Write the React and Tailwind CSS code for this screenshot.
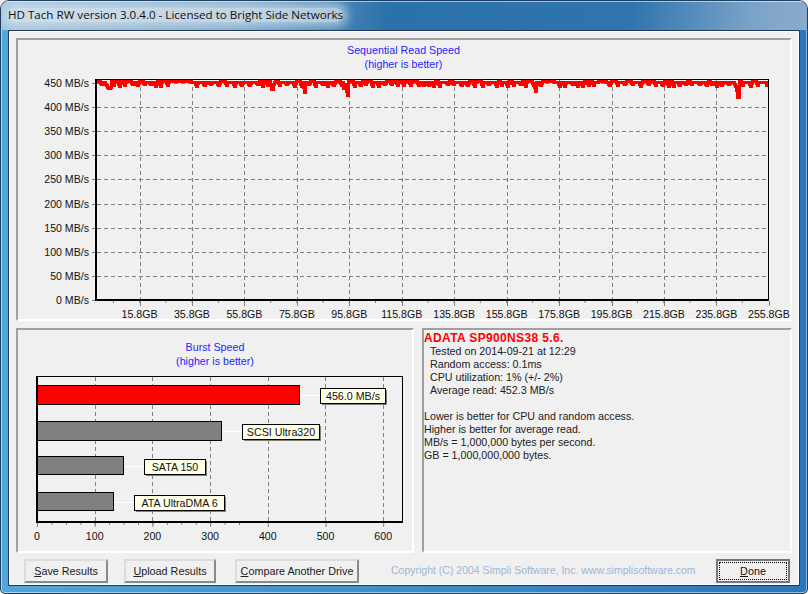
const font = { fontFamily: '"Liberation Sans", Arial, sans-serif' };

function tracePath() {
  let seed = 11;
  const rnd = () => {
    seed = (seed * 16807) % 2147483647;
    return seed / 2147483647;
  };
  const big = { 106: 87, 107: 88, 108: 88, 109: 87, 269: 85, 270: 89, 271: 89, 303: 92, 302: 87, 342: 88, 343: 87, 345: 91, 346: 95, 533: 87, 534: 91, 735: 90, 736: 97, 737: 97 };
  const flat = (x) => (x >= 172 && x < 190) || (x >= 543 && x < 553) || (x >= 597 && x < 605);
  const c = {};
  let x = 97;
  while (x <= 767) {
    const p = 5 + Math.floor(rnd() * 4);
    const top = 81 + Math.floor(rnd() * 2);
    const d = 84 + Math.floor(rnd() * 3);
    for (let i = 0; i < p; i++) {
      let y = top;
      if (i === p - 3) y = top + Math.round((d - top) / 2);
      if (i === p - 2) y = d;
      if (i === p - 1) y = top + 1;
      c[x + i] = y;
    }
    x += p;
  }
  let out = '';
  for (let i = 97; i <= 765; i++) {
    let y = c[i];
    if (flat(i)) y = 81;
    if (big[i]) y = big[i];
    if (i >= 763) y = i === 765 ? 85 : 82;
    c[i] = y;
    const prev = i > 97 ? c[i - 1] : y;
    const t = Math.min(prev, y) - 1;
    const b = Math.max(prev, y) + 2;
    out += `M${i} ${t}h3V${b}h-3Z`;
  }
  return out;
}

function SpeedChart() {
  const ys = [450, 400, 350, 300, 250, 200, 150, 100, 50, 0];
  const xs = ['15.8GB', '35.8GB', '55.8GB', '75.8GB', '95.8GB', '115.8GB', '135.8GB', '155.8GB', '175.8GB', '195.8GB', '215.8GB', '235.8GB', '255.8GB'];
  const yOf = (i) => 83 + i * 24.1;
  const xOf = (i) => 139.5 + i * 52.45;
  return (
    <svg width="776" height="283" viewBox="16 38 776 283" className="block absolute left-0 top-0" style={font}>
      {ys.map((v, i) => (
        <g key={v}>
          {i < 9 && <line x1="97" x2="768" y1={Math.round(yOf(i)) + 0.5} y2={Math.round(yOf(i)) + 0.5} stroke="#808080" strokeDasharray="4 3" />}
          <line x1="92" x2="96" y1={Math.round(yOf(i)) + 0.5} y2={Math.round(yOf(i)) + 0.5} stroke="#808080" />
          <text x="89" y={yOf(i) + 4} textAnchor="end" fontSize="10.6" fill="#111">{v} MB/s</text>
        </g>
      ))}
      {xs.map((v, i) => (
        <g key={v}>
          {i < 12 && <line x1={Math.round(xOf(i)) + 0.5} x2={Math.round(xOf(i)) + 0.5} y1="80" y2="300" stroke="#808080" strokeDasharray="4 3" />}
          <line x1={Math.round(xOf(i)) + 0.5} x2={Math.round(xOf(i)) + 0.5} y1="301" y2="306" stroke="#808080" />
          <text x={xOf(i)} y="318" textAnchor="middle" fontSize="10.6" fill="#111">{v}</text>
        </g>
      ))}
      {Array.from({ length: 25 }, (_, i) => (
        <line key={i} x1={113.5 + i * 26.2} x2={113.5 + i * 26.2} y1="301" y2="303" stroke="#808080" />
      ))}
      <path d={tracePath()} fill="#ff0000" shapeRendering="crispEdges" />
      <line x1="95.5" x2="769" y1="79.5" y2="79.5" stroke="#000" />
      <line x1="768.5" x2="768.5" y1="79" y2="301" stroke="#000" />
      <line x1="96" x2="96" y1="79" y2="301" stroke="#000" strokeWidth="2" />
      <line x1="95" x2="769" y1="300" y2="300" stroke="#000" strokeWidth="2" />
    </svg>
  );
}

function BurstChart() {
  const gx = [95, 152, 210, 268, 325, 383];
  const bars = [
    { y: 385, h: 19, w: 262, c: '#ff0000', lx: 320, ly: 388, lw: 65, t: '456.0 MB/s' },
    { y: 421, h: 19, w: 184, c: '#808080', lx: 242, ly: 424, lw: 77, t: 'SCSI Ultra320' },
    { y: 456, h: 18, w: 86, c: '#808080', lx: 144, ly: 459, lw: 61, t: 'SATA 150' },
    { y: 492, h: 18, w: 76, c: '#808080', lx: 134, ly: 495, lw: 90, t: 'ATA UltraDMA 6' },
  ];
  return (
    <svg width="398" height="225" viewBox="16 328 398 225" className="block absolute left-0 top-0" style={font}>
      {gx.map((x) => (
        <line key={x} x1={x + 0.5} x2={x + 0.5} y1="377" y2="521" stroke="#808080" strokeDasharray="4 3" />
      ))}
      {bars.map((b) => (
        <g key={b.t}>
          <line x1={37 + b.w} x2={b.lx} y1={b.ly + 7.5} y2={b.ly + 7.5} stroke="#fff" />
          <rect x="37.5" y={b.y + 0.5} width={b.w} height={b.h} fill={b.c} stroke="#000" />
          <rect x={b.lx + 2} y={b.ly + 2} width={b.lw} height="15" fill="#808080" />
          <rect x={b.lx + 0.5} y={b.ly + 0.5} width={b.lw} height="15" fill="#ffffe8" stroke="#000" />
          <text x={b.lx + b.lw / 2 + 0.5} y={b.ly + 12} textAnchor="middle" fontSize="10.7" fill="#111">{b.t}</text>
        </g>
      ))}
      <line x1="37" x2="403" y1="376.5" y2="376.5" stroke="#000" />
      <line x1="402.5" x2="402.5" y1="376" y2="522" stroke="#000" />
      <line x1="37" x2="37" y1="376" y2="523" stroke="#000" strokeWidth="2" />
      <line x1="36" x2="403" y1="522" y2="522" stroke="#000" strokeWidth="2" />
      {[0, 100, 200, 300, 400, 500, 600].map((v, i) => (
        <g key={v}>
          <line x1={37.5 + i * 57.7} x2={37.5 + i * 57.7} y1="523" y2="527" stroke="#808080" />
          <text x={37 + i * 57.7} y="540" textAnchor="middle" fontSize="10.6" fill="#111">{v}</text>
        </g>
      ))}
      {Array.from({ length: 14 }, (_, i) => (
        <line key={i} x1={37.5 + i * 14.43 + 14.43} x2={37.5 + i * 14.43 + 14.43} y1="523" y2="525" stroke="#808080" />
      ))}
    </svg>
  );
}

function Sunken({ className, children }) {
  return (
    <div className={`relative border-2 border-t-[#a0a0a0] border-l-[#a0a0a0] border-r-white border-b-white ${className}`}>
      {children}
    </div>
  );
}

function Btn({ w, u, rest }) {
  return (
    <button className={`h-6 ${w} shrink-0 bg-[#f0f0f0] border-2 border-t-[#dcdcdc] border-l-[#dcdcdc] border-r-[#8a8a8a] border-b-[#8a8a8a] text-[10.8px] text-[#222] whitespace-nowrap flex items-center justify-center`}>
      <span><span className="underline">{u}</span>{rest}</span>
    </button>
  );
}

export default function App() {
  return (
    <div className="w-[808px] h-[594px] bg-[#f5f5f5] overflow-hidden" style={font}>
      <div className="w-full h-full rounded-t-[9px] rounded-b-[5px] border border-[#20405f] bg-[linear-gradient(90deg,#52a6dc_0%,#3f90cc_45%,#2a76bb_100%)] shadow-[inset_0_0_0_1px_rgba(255,255,255,0.5)] flex flex-col px-[7px] pb-[7px] overflow-hidden">
        <div className="h-[29px] shrink-0 -mx-[7px] px-[7px] flex items-center pb-[2px] bg-[linear-gradient(100deg,#a5c6de_0%,#7aa9cc_30%,#2b71ab_48%,#2f74ae_78%,#7ba3c8_93%,#8aaccc_100%)] shadow-[inset_0_1px_0_rgba(255,255,255,0.55)]">
          <span className="text-[11.6px] text-[#111] bg-[#dfe7ee]/70 shadow-[0_0_10px_5px_rgba(223,231,238,0.6)] rounded-[8px] leading-[14px] whitespace-nowrap" style={{ fontFamily: '"Open Sans", sans-serif' }}>
            HD Tach RW version 3.0.4.0 - Licensed to Bright Side Networks
          </span>
        </div>
        <div className="flex-1 border border-[#1e3a56] bg-[#f0f0f0] shadow-[inset_0_0_0_1px_#ffffff] px-[7px] pt-[7px] flex flex-col min-h-0">
          <Sunken className="h-[283px] w-[776px]">
            <div className="relative z-10 pt-[3px] -ml-[1px] text-center text-[10.7px] leading-[14px] text-[#1f1fff]">
              <div>Sequential Read Speed</div>
              <div>(higher is better)</div>
            </div>
            <div className="absolute -left-[2px] -top-[2px]"><SpeedChart /></div>
          </Sunken>
          <div className="flex gap-[8px] mt-[7px] h-[225px]">
            <Sunken className="w-[398px]">
              <div className="relative z-10 pt-[10px] text-center text-[10.7px] leading-[14px] text-[#1f1fff]">
                <div>Burst Speed</div>
                <div>(higher is better)</div>
              </div>
              <div className="absolute -left-[2px] -top-[2px]"><BurstChart /></div>
            </Sunken>
            <Sunken className="flex-1 pt-[1px] text-[10.7px] leading-[13px] text-[#222]">
              <div className="font-bold text-[12px] leading-[14px] text-[#ff0000] tracking-[0.03em]">ADATA SP900NS38 5.6.</div>
              <div className="pl-[6px]">Tested on 2014-09-21 at 12:29</div>
              <div className="pl-[6px]">Random access: 0.1ms</div>
              <div className="pl-[6px]">CPU utilization: 1% (+/- 2%)</div>
              <div className="pl-[6px]">Average read: 452.3 MB/s</div>
              <div className="h-[13px]" />
              <div>Lower is better for CPU and random access.</div>
              <div>Higher is better for average read.</div>
              <div>MB/s = 1,000,000 bytes per second.</div>
              <div>GB = 1,000,000,000 bytes.</div>
            </Sunken>
          </div>
          <div className="flex items-center mt-[6px] h-6 pl-[8px]">
            <Btn w="w-[84px]" u="S" rest="ave Results" />
            <div className="w-[16px] shrink-0" />
            <Btn w="w-[92px]" u="U" rest="pload Results" />
            <div className="w-[19px] shrink-0" />
            <Btn w="w-[124px]" u="C" rest="ompare Another Drive" />
            <div className="w-[32px] shrink-0" />
            <div className="text-[10.5px] text-[#9db6d8] whitespace-nowrap w-[325px] shrink-0">Copyright (C) 2004 Simpli Software, Inc. www.simplisoftware.com</div>
            <button className="h-6 w-[74px] shrink-0 bg-[#f0f0f0] border-2 border-[#777] text-[10.8px] text-[#111] flex items-center justify-center p-[1px]">
              <span className="w-full h-full border border-dotted border-black flex items-center justify-center"><span><span className="underline">D</span>one</span></span>
            </button>
          </div>
        </div>
      </div>
    </div>
  );
}
